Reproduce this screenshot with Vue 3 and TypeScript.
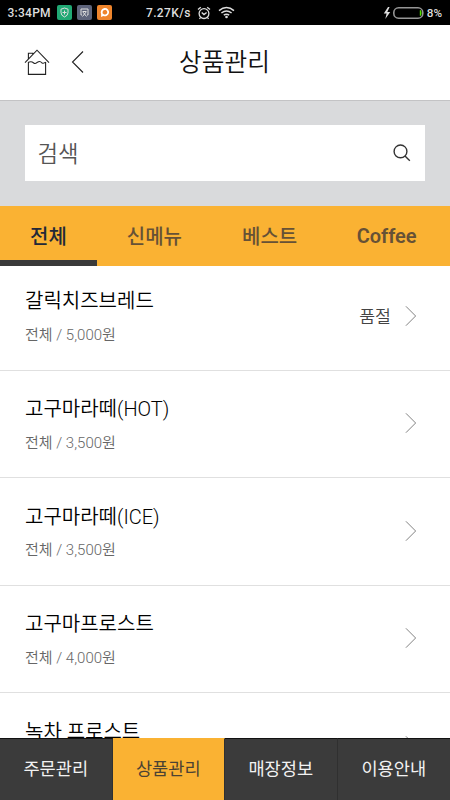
<script setup lang="ts">
interface Product {
  name: string
  category: string
  price: number
  soldOut?: boolean
}

const tabs: string[] = ['전체', '신메뉴', '베스트', 'Coffee']
const activeTab = '전체'

const products: Product[] = [
  { name: '갈릭치즈브레드', category: '전체', price: 5000, soldOut: true },
  { name: '고구마라떼(HOT)', category: '전체', price: 3500 },
  { name: '고구마라떼(ICE)', category: '전체', price: 3500 },
  { name: '고구마프로스트', category: '전체', price: 4000 },
]
const lastProduct = '녹차 프로스트'

const menus: string[] = ['주문관리', '상품관리', '매장정보', '이용안내']
const activeMenu = '상품관리'

const formatPrice = (value: number): string => `${value.toLocaleString('en-US')}원`
</script>

<template>
  <div class="screen">
    <div class="status">
      <span class="clock">3:34PM</span>
      <div class="apps">
        <svg class="app green" viewBox="0 0 15 15">
          <path d="M7.5 3 L11 4.2 V7.5 Q11 10.6 7.5 12 Q4 10.6 4 7.5 V4.2 Z M7.5 5.5 V9.5 M5.5 7.5 H9.5" />
        </svg>
        <svg class="app slate" viewBox="0 0 15 15">
          <path d="M5 10 H4 V4 H11 V10 H10 M5.5 6.5 L9.5 11.5 M9.5 6.5 L5.5 11.5 M6 6.5 H9" />
        </svg>
        <svg class="app orange" viewBox="0 0 15 15">
          <path class="bubble" d="M7.6 4 A3.2 3.2 0 1 1 6.3 9.9 L5 10.6 V8.8 A3.3 3.3 0 0 1 7.6 4 Z" />
        </svg>
      </div>
      <span class="speed">7.27K/s</span>
      <svg class="alarm" viewBox="0 0 14 14">
        <circle cx="7" cy="7.6" r="4.9" />
        <path d="M1 3.6 L3.8 1.2 M13 3.6 L10.2 1.2 M4.7 6.6 L7 8.6 L9.6 6.6 M3.5 11.5 L2.5 13 M10.5 11.5 L11.5 13" />
      </svg>
      <svg class="wifi" viewBox="0 0 17 13">
        <path d="M1 4.6 Q8.5 -1.4 16 4.6 M3.4 7 Q8.5 2.9 13.6 7 M5.8 9.2 Q8.5 7.2 11.2 9.2" />
        <circle cx="8.5" cy="11" r="1.3" />
      </svg>
      <svg class="battery" viewBox="0 0 42 14">
        <path class="bolt" d="M5 1 L0.8 7.4 H3.6 L2.3 13 L7.2 6 H4.3 L6.6 1 Z" />
        <rect class="shell" x="10.8" y="1.8" width="29" height="10.4" rx="4.8" />
        <path class="charge" d="M36.8 4.3 H38 L38.6 7 L38 9.8 H36.8 Z" />
      </svg>
      <span class="percent">8%</span>
    </div>

    <header class="header">
      <svg class="home" viewBox="0 0 26 28">
        <path d="M1 14.6 L13 2.2 L25 14.6 M4.4 11.4 V5.2 H8.8 V6.4 M4.4 14 V26.4 H21.6 V14 M4.4 14.3 Q7.4 12.8 9.7 15 Q11.7 16.2 13.5 14.2 Q16 12.4 18 15 Q20 15.8 21.6 14" />
      </svg>
      <svg class="back" viewBox="0 0 13 24"><path d="M12 1.5 L1.5 12 L12 22.5" /></svg>
      <h1 class="title">상품관리</h1>
    </header>

    <div class="search">
      <div class="field">
        <span class="placeholder">검색</span>
        <svg class="lens" viewBox="0 0 18 18">
          <circle cx="7.5" cy="7.4" r="6.4" />
          <path d="M12 12 L16.8 16.8" />
        </svg>
      </div>
    </div>

    <nav class="tabs">
      <div v-for="tab in tabs" :key="tab" class="tab" :class="{ active: tab === activeTab }">{{ tab }}</div>
    </nav>

    <main class="list">
      <div v-for="product in products" :key="product.name" class="row">
        <div class="info">
          <div class="name">{{ product.name }}</div>
          <div class="meta">{{ product.category }} / {{ formatPrice(product.price) }}</div>
        </div>
        <span v-if="product.soldOut" class="sold">품절</span>
        <svg class="chevron" viewBox="0 0 13 23"><path d="M1 1 L11.5 11.5 L1 22" /></svg>
      </div>
      <div class="row partial">
        <div class="name">{{ lastProduct }}</div>
        <svg class="chevron" viewBox="0 0 13 23"><path d="M1 1 L11.5 11.5 L1 22" /></svg>
      </div>
    </main>

    <footer class="bottom">
      <div v-for="menu in menus" :key="menu" class="menu" :class="{ current: menu === activeMenu }">{{ menu }}</div>
    </footer>
  </div>
</template>

<style>
body {
  margin: 0;
}
</style>

<style scoped>
.screen {
  display: flex;
  flex-direction: column;
  width: 450px;
  height: 800px;
  overflow: hidden;
  background: #fff;
  color: #111;
  font-family: Roboto, "Noto Sans CJK KR", sans-serif;
}
svg {
  display: block;
  flex: none;
  fill: none;
  stroke: #222;
}
.status {
  display: flex;
  flex: none;
  align-items: center;
  height: 25px;
  box-sizing: border-box;
  padding: 0 8px 0 7.5px;
  background: #000;
  color: #dedede;
  font-size: 12px;
  font-weight: 500;
  white-space: nowrap;
}
.status svg {
  stroke: #dedede;
}
.clock {
  width: 49.5px;
  letter-spacing: 0.25px;
}
.apps {
  display: flex;
  gap: 5px;
  width: 89px;
}
.app {
  width: 15px;
  height: 15px;
  border-radius: 2px;
}
.green {
  background: #21a974;
}
.slate {
  background: #5e647b;
}
.orange {
  background: #ef852c;
}
.app .bubble {
  stroke: #fff;
  stroke-width: 1.8;
}
.speed {
  width: 51px;
  letter-spacing: 0.35px;
}
.alarm {
  width: 14px;
  height: 14px;
  stroke-width: 1.3;
}
.wifi {
  width: 17px;
  height: 13px;
  margin-left: 7px;
  stroke-width: 1.5;
}
.wifi circle {
  fill: #dedede;
  stroke: none;
}
.battery {
  width: 42px;
  height: 14px;
  margin-left: auto;
}
.status .bolt {
  fill: #dedede;
  stroke: none;
}
.status .shell {
  stroke: #969696;
  stroke-width: 1.6;
}
.status .charge {
  fill: #55e000;
  stroke: none;
}
.percent {
  margin-left: 1.5px;
  font-size: 11.7px;
}
.header {
  display: grid;
  grid-template-columns: 26px 13px 1fr 64px;
  flex: none;
  align-items: center;
  height: 75px;
  padding-left: 24px;
  box-sizing: border-box;
}
.home {
  width: 26px;
  height: 28px;
  margin-bottom: 2px;
  stroke-width: 1.1;
}
.back {
  width: 13px;
  height: 24px;
  margin: 0 0 1px 21px;
  stroke-width: 1.1;
}
.title {
  margin: 0;
  text-align: center;
  font-size: 24.7px;
  line-height: 36px;
  font-weight: 350;
}
.search {
  flex: none;
  height: 106px;
  box-sizing: border-box;
  padding: 24px 25px;
  border-top: 1px solid #c3c3c5;
  background: #d9dadc;
}
.field {
  display: flex;
  align-items: center;
  justify-content: space-between;
  height: 56px;
  padding: 0 14px 0 12.5px;
  background: #fff;
}
.placeholder {
  padding-bottom: 2px;
  color: #555;
  font-size: 22.3px;
  font-weight: 350;
}
.lens {
  width: 18px;
  height: 18px;
  stroke: #333;
  stroke-width: 1.4;
}
.tabs {
  display: flex;
  flex: none;
  height: 60px;
  background: #fab233;
}
.tab {
  box-sizing: border-box;
  height: 60px;
  padding: 0 30px;
  border-bottom: 6px solid transparent;
  color: #665136;
  font-size: 20px;
  font-weight: 500;
  line-height: 62px;
  white-space: nowrap;
}
.tab:last-child {
  padding-left: 29.5px;
  font-weight: 600;
  line-height: 61px;
}
.active {
  border-color: #3a3a3a;
  color: #222838;
}
.list {
  flex: 1;
  min-height: 0;
  overflow: hidden;
}
.row {
  display: flex;
  align-items: center;
  height: 107.4px;
  box-sizing: border-box;
  padding: 0 33px 0 25px;
  border-bottom: 1.5px solid #e0e0e0;
  font-weight: 350;
}
.row:first-child {
  height: 105px;
  padding-bottom: 4px;
}
.info {
  flex: 1;
  padding-top: 1px;
}
.name {
  color: #000;
  font-size: 20px;
  line-height: 30px;
}
.meta {
  margin-top: 6.5px;
  color: #666;
  font-size: 15px;
  line-height: 24px;
}
.sold {
  margin-right: 14px;
  padding-bottom: 2px;
  color: #444;
  font-size: 17.3px;
}
.chevron {
  width: 12px;
  height: 22px;
  margin-bottom: 2px;
  stroke: #777;
}
.row:first-child .chevron {
  margin-bottom: 1px;
}
.partial {
  align-items: flex-start;
  justify-content: space-between;
  height: 46px;
  padding-top: 22px;
  border-bottom: 0;
}
.partial .name {
  padding-top: 2px;
}
.partial .chevron {
  margin-top: 20px;
}
.bottom {
  display: grid;
  grid-template-columns: repeat(4, 1fr);
  flex: none;
  height: 62px;
  background: #3b3b3b;
}
.menu {
  box-sizing: border-box;
  border-right: 1px solid #303030;
  border-top: 1px solid #111;
  color: #f2f2f2;
  font-size: 17.6px;
  line-height: 61px;
  text-align: center;
}
.menu:last-child {
  border-right: 0;
}
.current {
  border-top-color: #fab233;
  background: #fab233;
  color: #4c4234;
}
</style>
